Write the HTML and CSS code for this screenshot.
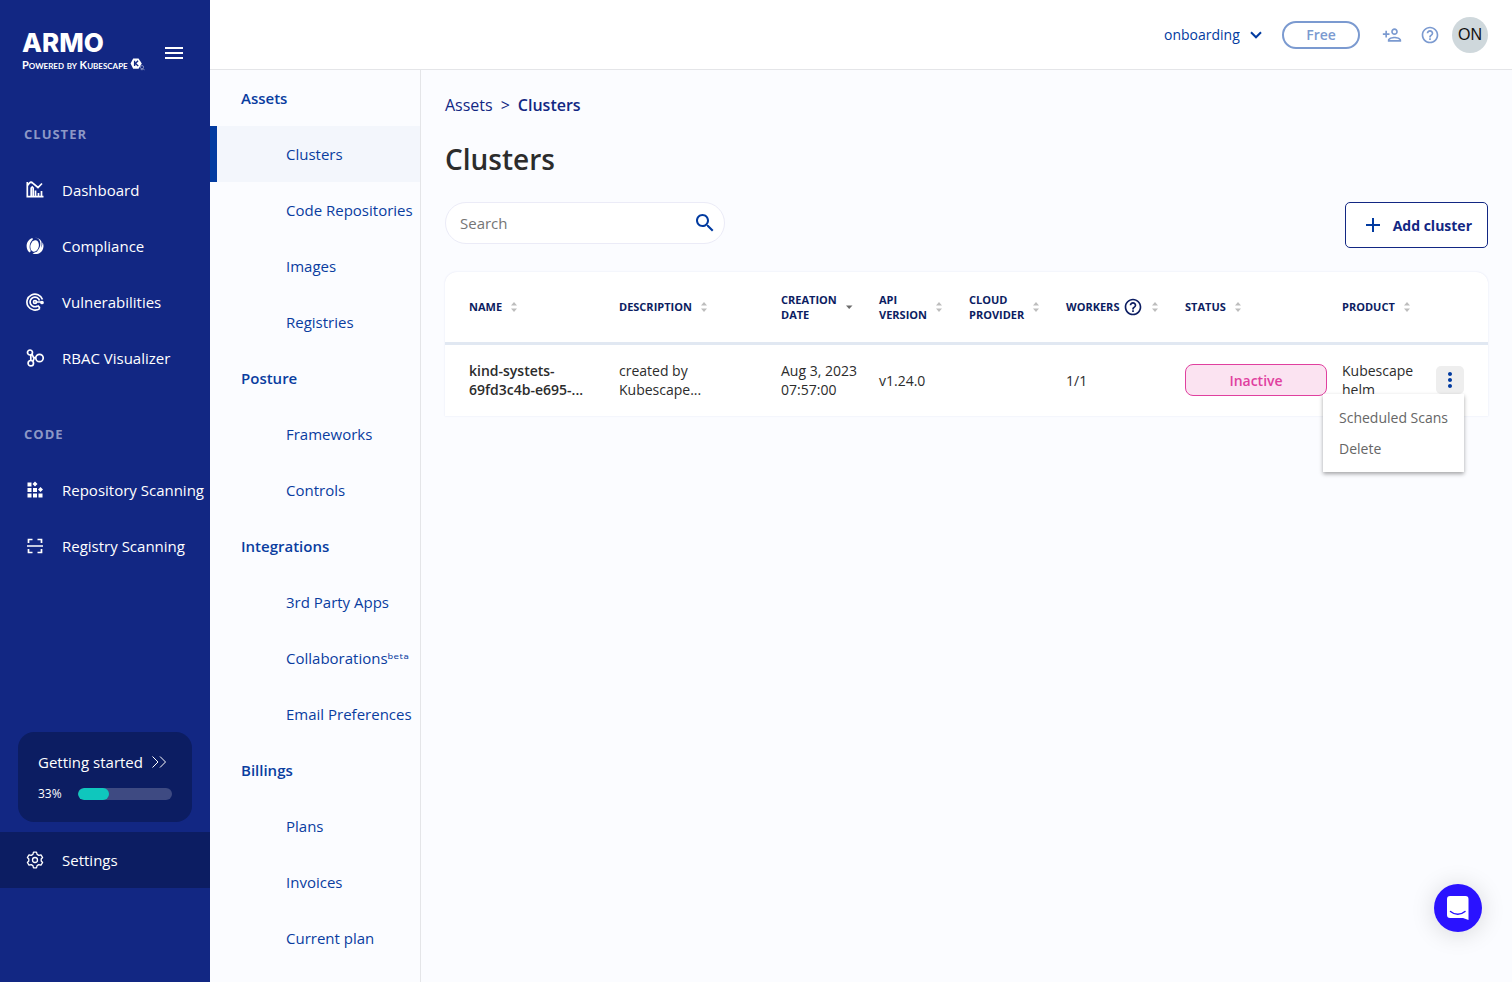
FILE: index.html
```html
<!DOCTYPE html>
<html lang="en">
<head>
<meta charset="utf-8">
<title>Clusters</title>
<meta name="viewport" content="width=device-width, initial-scale=1">
<link rel="stylesheet" href="styles.css">
</head>
<body>
<svg class="sprite" aria-hidden="true">
  <symbol id="sort" viewBox="0 0 8 12"><path d="M1 4.500 4 1l3 3.500zM1 7.500 4 11l3-3.500z"/></symbol>
  <symbol id="help" viewBox="0 0 24 24"><path d="M11 18h2v-2h-2v2zm1-16C6.480 2 2 6.480 2 12s4.480 10 10 10 10-4.480 10-10S17.520 2 12 2zm0 18c-4.410 0-8-3.590-8-8s3.590-8 8-8 8 3.590 8 8-3.590 8-8 8zm0-14c-2.210 0-4 1.790-4 4h2c0-1.100.9-2 2-2s2 .9 2 2c0 2-3 1.750-3 5h2c0-2.250 3-2.500 3-5 0-2.210-1.790-4-4-4z"/></symbol>
</svg>
<div class="app">
  <aside class="sidebar">
    <div class="brand-row">
      <a class="brand" href="#">
        <span class="brand-name">ARMO</span>
        <span class="brand-sub"><span>Powered by Kubescape</span>
          <svg class="brand-mark" viewBox="0 0 14 12"><path fill="#fff" d="M3 .5h5l3 4.500-3 5H3L.5 5z"/><path d="M4.300 2.500v5M7.500 2.500 5 5l2.700 2.500" fill="none" stroke="#122783" stroke-width="1.300"/><circle cx="11.200" cy="8.500" r="1.500" fill="none" stroke="#a0a9cd" stroke-width=".7"/><path d="m12.200 9.700 1.300 1.600M10 10.800h2" stroke="#a0a9cd" stroke-width=".7"/></svg>
        </span>
      </a>
      <button class="icon-button" aria-label="Toggle menu"><svg class="icon-24" viewBox="0 0 24 24"><path d="M3 18h18v-2H3v2zm0-5h18v-2H3v2zm0-7v2h18V6H3z"/></svg></button>
    </div>
    <nav class="side-nav" aria-label="Main">
      <h2 class="side-title">CLUSTER</h2>
      <a class="side-link" href="#"><svg class="side-icon stroke" viewBox="0 0 18 18"><path d="M1.300 1v14.700H17.500M1.500 4.500 3.500 2c1-1 2.300-.8 3.300.2L12 6.500 16 2.500M5.200 15V7l1-1 1 1v8M9.500 15V9.500M12.500 15v-3M15.500 15v-5"/></svg>Dashboard</a>
      <a class="side-link" href="#"><svg class="side-icon" viewBox="0 0 18 18"><ellipse cx="8.600" cy="9" rx="4.200" ry="5.900" transform="rotate(14 8.600 9)"/><path d="M6.500 1C2.500 2.200.6 5.500.6 9c0 3 1.300 5.300 3.200 6.600l1-1.600C2.800 11 3.300 5.500 6.800 2.500zM9 .8c2 0 4.200.8 5 3.700.8 3 0 7-2.800 9.500l1.200 1C15.500 12 16 8 15.400 4.500 14 1.800 11.500.6 9 .8zM6.500 16.400c4.500 2 9.500-.5 10.700-5.200.7-2.700.1-4.900-.8-6 .5 5.200-3.400 9.400-9.900 11.200z"/></svg>Compliance</a>
      <a class="side-link" href="#"><svg class="side-icon stroke" viewBox="0 0 18 18"><path d="M16.500 6.500A8 8 0 1 0 14 15.300M13.500 7.500a4.800 4.800 0 1 0-2 5.500M9.500 9h5.500"/><circle cx="9" cy="9" r="1.500"/><circle cx="16" cy="9.500" r="1" fill="#fff"/><path d="m11.500 12.500 2.500 2.300"/></svg>Vulnerabilities</a>
      <a class="side-link" href="#"><svg class="side-icon stroke" viewBox="0 0 18 18"><circle cx="4" cy="3.500" r="2.500"/><circle cx="4.800" cy="14.200" r="2.700"/><circle cx="13.500" cy="9" r="3.700"/><path d="M4.800 6v5.600M6 5l1.500 3.500H10M7 12l1.200-2.800"/></svg>RBAC Visualizer</a>
      <h2 class="side-title spaced">CODE</h2>
      <a class="side-link" href="#"><svg class="side-icon" viewBox="0 0 18 18"><path d="M1.500 1.500h4v4h-4zM1.500 7h4v4h-4zM1.500 12.500h4v4h-4zM7 7h4v4H7zM7 12.500h4v4H7zM12.500 12.500h4v4h-4zM9 .5l2.500 2.500L9 5.500 6.500 3zM14.500 6l2.500 2.500-2.500 2.500L12 8.500z"/></svg>Repository Scanning</a>
      <a class="side-link" href="#"><svg class="side-icon stroke" viewBox="0 0 18 18"><path d="M1 9h16M2.500 6V2.500h4M11.500 2.500h4V6M2.500 12v3.500h4M11.500 15.500h4V12"/></svg>Registry Scanning</a>
    </nav>
    <div class="side-bottom">
      <a class="started" href="#">
        <span class="started-head">Getting started <svg class="double" viewBox="0 0 16 14"><path d="m1.500 1.500 5.500 5.500-5.500 5.500M9 1.500 14.500 7 9 12.500"/></svg></span>
        <span class="started-row"><span class="percent">33%</span><progress class="bar" value="33" max="100" aria-label="Getting started progress"></progress></span>
      </a>
      <a class="side-link current" href="#"><svg class="side-icon gear" viewBox="0 0 18 18"><path d="M7.500 1.200h3l.6 2.200 1.700 1 2.200-.6 1.600 2.700L15.200 8v2l1.400 1.500-1.600 2.700-2.200-.6-1.700 1-.6 2.200h-3l-.6-2.200-1.700-1-2.200.6-1.600-2.700L2.800 10V8L1.400 6.500 3 3.800l2.200.6 1.700-1z"/><circle cx="9" cy="9" r="2.500"/></svg>Settings</a>
    </div>
  </aside>
  <div class="page">
    <header class="topbar">
      <div class="account">
        <select class="account-select" aria-label="Account"><option>onboarding</option></select>
        <svg class="account-arrow" viewBox="0 0 12 8"><path d="m1 1.300 5 5 5-5"/></svg>
      </div>
      <button class="plan">Free</button>
      <button class="icon-button invite" aria-label="Invite user"><svg class="icon-20" viewBox="0 0 24 24"><path d="M15 12c2.210 0 4-1.790 4-4s-1.790-4-4-4-4 1.790-4 4 1.790 4 4 4zm0-6c1.100 0 2 .9 2 2s-.9 2-2 2-2-.9-2-2 .9-2 2-2zm0 8c-2.670 0-8 1.340-8 4v2h16v-2c0-2.660-5.330-4-8-4zm-6 4c.22-.72 3.310-2 6-2 2.700 0 5.800 1.290 6 2H9zm-3-3v-3h3v-2H6V7H4v3H1v2h3v3z"/></svg></button>
      <button class="icon-button assist" aria-label="Help"><svg class="icon-20"><use href="#help"/></svg></button>
      <button class="avatar">ON</button>
    </header>
    <div class="body">
      <nav class="sub-nav" aria-label="Settings">
        <h3 class="sub-title">Assets</h3>
        <a class="sub-link active" href="#">Clusters</a>
        <a class="sub-link" href="#">Code Repositories</a>
        <a class="sub-link" href="#">Images</a>
        <a class="sub-link" href="#">Registries</a>
        <h3 class="sub-title">Posture</h3>
        <a class="sub-link" href="#">Frameworks</a>
        <a class="sub-link" href="#">Controls</a>
        <h3 class="sub-title">Integrations</h3>
        <a class="sub-link" href="#">3rd Party Apps</a>
        <a class="sub-link" href="#">Collaborations<span class="beta">ᵇᵉᵗᵃ</span></a>
        <a class="sub-link" href="#">Email Preferences</a>
        <h3 class="sub-title">Billings</h3>
        <a class="sub-link" href="#">Plans</a>
        <a class="sub-link" href="#">Invoices</a>
        <a class="sub-link" href="#">Current plan</a>
      </nav>
      <main class="content">
        <nav class="crumbs" aria-label="Breadcrumb"><a href="#">Assets</a><span>&gt;</span><a class="here" href="#">Clusters</a></nav>
        <h1 class="title">Clusters</h1>
        <div class="tools">
          <label class="search"><input type="search" placeholder="Search" aria-label="Search"><svg class="icon-24" viewBox="0 0 24 24"><path d="M15.500 14h-.79l-.28-.27C15.410 12.590 16 11.110 16 9.500 16 5.910 13.090 3 9.500 3S3 5.910 3 9.500 5.910 16 9.500 16c1.610 0 3.090-.59 4.230-1.570l.27.28v.79l5 4.990L20.490 19l-4.990-5zm-6 0C7.010 14 5 11.990 5 9.500S7.010 5 9.500 5 14 7.010 14 9.500 11.990 14 9.500 14z"/></svg></label>
          <button class="add"><svg class="icon-24" viewBox="0 0 24 24"><path d="M19 13h-6v6h-2v-6H5v-2h6V5h2v6h6v2z"/></svg>Add cluster</button>
        </div>
        <div class="card">
          <table class="grid">
            <colgroup><col class="c-name"><col class="c-desc"><col class="c-date"><col class="c-api"><col class="c-cloud"><col class="c-workers"><col class="c-status"><col class="c-product"><col class="c-menu"></colgroup>
            <thead>
              <tr>
                <th scope="col"><button class="sorter">NAME<svg class="sort"><use href="#sort"/></svg></button></th>
                <th scope="col"><button class="sorter">DESCRIPTION<svg class="sort"><use href="#sort"/></svg></button></th>
                <th scope="col" aria-sort="descending"><button class="sorter"><span>CREATION<br>DATE</span><svg class="sort on" viewBox="0 0 8 12"><path d="M1 4.500h6.500L4.200 8z"/></svg></button></th>
                <th scope="col"><button class="sorter"><span>API<br>VERSION</span><svg class="sort"><use href="#sort"/></svg></button></th>
                <th scope="col"><button class="sorter"><span>CLOUD<br>PROVIDER</span><svg class="sort"><use href="#sort"/></svg></button></th>
                <th scope="col"><button class="sorter">WORKERS<svg class="hint"><use href="#help"/></svg><svg class="sort"><use href="#sort"/></svg></button></th>
                <th scope="col"><button class="sorter">STATUS<svg class="sort"><use href="#sort"/></svg></button></th>
                <th scope="col"><button class="sorter">PRODUCT<svg class="sort"><use href="#sort"/></svg></button></th>
                <th></th>
              </tr>
            </thead>
            <tbody>
              <tr>
                <td class="strong">kind-systets-<br>69fd3c4b-e695-...</td>
                <td>created by<br>Kubescape...</td>
                <td>Aug 3, 2023<br>07:57:00</td>
                <td>v1.24.0</td>
                <td></td>
                <td>1/1</td>
                <td class="status-cell"><span class="status">Inactive</span></td>
                <td>Kubescape<br>helm</td>
                <td class="menu-cell">
                  <div class="more">
                    <button class="more-button" aria-label="Row actions"><svg class="icon-24" viewBox="0 0 24 24"><path d="M12 8c1.100 0 2-.9 2-2s-.9-2-2-2-2 .9-2 2 .9 2 2 2zm0 2c-1.100 0-2 .9-2 2s.9 2 2 2 2-.9 2-2-.9-2-2-2zm0 6c-1.100 0-2 .9-2 2s.9 2 2 2 2-.9 2-2-.9-2-2-2z"/></svg></button>
                    <div class="menu" role="menu"><button role="menuitem">Scheduled Scans</button><button role="menuitem">Delete</button></div>
                  </div>
                </td>
              </tr>
            </tbody>
          </table>
        </div>
      </main>
    </div>
  </div>
</div>
<button class="chat" aria-label="Open chat"><svg viewBox="0 0 24 26"><path fill="#fff" d="M4 1h15.500a3 3 0 0 1 3 3v21l-5.500-2H4a3 3 0 0 1-3-3V4a3 3 0 0 1 3-3z"/><path d="M4.500 16.500c4.300 3.600 10.200 3.600 14.500 0" fill="none" stroke="#2a12ff" stroke-width="1.500" stroke-linecap="round"/></svg></button>
</body>
</html>
```
FILE: styles.css
```css
* { box-sizing: border-box; }
body { margin: 0; font-family: "Open Sans", sans-serif; font-size: 14px; color: #2c2c2c; background: #fbfcff; }
a { color: inherit; text-decoration: none; }
button { font: inherit; color: inherit; background: none; border: 0; padding: 0; cursor: pointer; }
svg { display: block; flex: none; fill: currentColor; }
h1, h2, h3 { margin: 0; }
.sprite { display: none; }
.icon-24 { width: 24px; height: 24px; }
.icon-20 { width: 20px; height: 20px; }

.app { display: flex; height: 100vh; overflow: hidden; }

.sidebar { flex: 0 0 210px; display: flex; flex-direction: column; background: #122783; color: #fff; white-space: nowrap; }
.brand-row { display: flex; justify-content: space-between; align-items: center; height: 106px; padding: 0 24px 0 22px; }
.brand { display: flex; flex-direction: column; margin-bottom: 6px; }
.brand-name { font: 800 26px/28px Inter, sans-serif; }
.brand-sub { display: flex; align-items: center; font: 700 11px/15px Lato, sans-serif; font-variant: small-caps; gap: 2px; }
.brand-mark { width: 15px; height: 13px; }
.side-title { height: 56px; padding-left: 24px; font-size: 13px; line-height: 56px; font-weight: 700; letter-spacing: 1px; color: #8d98c6; }
.spaced { margin-top: 20px; }
.side-link { display: flex; align-items: center; gap: 18px; height: 56px; padding-left: 26px; font-size: 15px; }
.side-icon { width: 18px; height: 18px; }
.stroke { fill: none; stroke: #fff; stroke-width: 1.700; }
.gear { fill: none; stroke: #fff; stroke-width: 1.300; stroke-linejoin: round; }
.side-bottom { margin-top: auto; padding-bottom: 94px; }
.started { display: flex; flex-direction: column; gap: 12px; height: 90px; margin: 0 18px 10px; padding: 20px; border-radius: 16px; background: #0c1d62; }
.started-head { display: flex; align-items: center; gap: 8px; font-size: 15px; line-height: 20px; }
.double { width: 16px; height: 14px; fill: none; stroke: #fff; }
.started-row { display: flex; align-items: center; font-size: 12px; line-height: 20px; }
.percent { width: 40px; }
.bar { flex: none; width: 94px; height: 12px; border: 0; border-radius: 6px; overflow: hidden; appearance: none; background: #3e4a82; }
.bar::-webkit-progress-bar { background: #3e4a82; }
.bar::-webkit-progress-value { background: #0fc7bd; border-radius: 6px; }
.current { background: #0c1d62; }

.page { flex: 1; min-width: 0; display: flex; flex-direction: column; }
.topbar { flex: none; display: flex; align-items: center; justify-content: flex-end; height: 70px; padding-right: 24px; background: #fff; border-bottom: 1px solid #e4e5e8; color: #7b9ad0; }
.account { display: flex; align-items: center; color: #023ba0; }
.account-select { appearance: none; margin: 0 -22px 0 0; padding: 0 32px 0 0; border: 0; background: none; font: 14px/20px "Open Sans", sans-serif; color: inherit; }
.account-arrow { width: 12px; height: 8px; margin-right: 20px; fill: none; stroke: currentColor; stroke-width: 2; pointer-events: none; }
.plan { width: 78px; height: 28px; border: 2px solid #7b9ad0; border-radius: 14px; font-weight: 600; line-height: 24px; }
.invite { margin-left: 22px; }
.assist { margin: 0 12px 0 18px; }
.avatar { width: 36px; height: 36px; border-radius: 50%; background: #cfd8dc; color: #111; font: 16px "Liberation Sans", sans-serif; }

.body { flex: 1; min-height: 0; display: flex; }
.sub-nav { flex: 0 0 211px; border-right: 1px solid #e4e5e8; color: #0a3d9f; font-size: 15px; white-space: nowrap; overflow: hidden; }
.sub-title { height: 56px; padding-left: 31px; font-size: 15px; line-height: 56px; font-weight: 600; }
.sub-link { display: block; height: 56px; padding-left: 69px; border-left: 7px solid transparent; line-height: 56px; }
.active { border-color: #023ba0; background: #f3f6fc; }
.beta { font-family: "DejaVu Sans", sans-serif; font-size: 14px; line-height: 20px; }

.content { flex: 1; min-width: 0; padding: 24px; }
.crumbs { display: flex; gap: 8px; font-size: 16px; line-height: 22px; color: #122783; }
.here { font-weight: 600; }
.title { margin-top: 24px; font-size: 28px; line-height: 38px; font-weight: 600; }
.tools { display: flex; justify-content: space-between; align-items: flex-start; margin-top: 24px; }
.search { display: flex; align-items: center; width: 280px; height: 42px; padding: 0 7px 0 14px; border: 1px solid #ebebf7; border-radius: 21px; background: #fff; color: #023ba0; }
.search input { flex: 1; min-width: 0; border: 0; padding: 0; outline: 0; background: none; font: 15px/20px "Open Sans", sans-serif; color: #2c2c2c; }
.search input::placeholder { color: #757575; }
.add { display: flex; align-items: center; gap: 8px; height: 46px; padding: 0 15px; border: 1px solid #122783; border-radius: 5px; background: #fff; color: #122783; font-weight: 700; }
.add svg { color: #023ba0; }

.card { margin-top: 24px; border-radius: 12px 12px 0 0; background: #fff; box-shadow: 0 0 2px #dfe2f2; }
.grid { width: 100%; table-layout: fixed; border-collapse: collapse; }
.c-name { width: 174px; }
.c-desc { width: 162px; }
.c-date { width: 98px; }
.c-api { width: 90px; }
.c-cloud { width: 97px; }
.c-workers { width: 119px; }
.c-status { width: 157px; }
.c-product { width: 94px; }
.c-menu { width: 52px; }
th, td { padding: 0; text-align: left; }
th:first-child, td:first-child { padding-left: 24px; }
thead tr { height: 71px; border-bottom: 3px solid #e1e8f2; }
tbody tr { height: 73px; }
td { line-height: 19px; }
.sorter { display: flex; align-items: center; text-align: left; font-size: 11px; line-height: 15px; font-weight: 700; color: #0c1d62; white-space: nowrap; }
.sort { width: 8px; height: 12px; margin-left: 8px; color: #bdbdbd; }
.on { color: #6b6b6b; }
.hint { width: 20px; height: 20px; margin-left: 4px; }
.strong { font-weight: 600; }
.status-cell { padding-right: 15px; }
.status { display: block; height: 32px; border: 1px solid #e0409f; border-radius: 8px; background: #fbe3f1; color: #e0409f; text-align: center; line-height: 32px; font-weight: 600; }
.more { position: relative; width: 28px; height: 28px; }
.more-button { display: grid; place-items: center; width: 28px; height: 28px; border-radius: 5px; background: #eee; color: #023ba0; }
.menu { position: absolute; top: 100%; right: 0; padding: 8px 0; background: #fff; box-shadow: 0 2px 4px rgba(0, 0, 0, .35); }
.menu button { display: block; width: 100%; padding: 0 16px; line-height: 31px; text-align: left; white-space: nowrap; color: #666; }

.chat { position: fixed; right: 30px; bottom: 50px; display: grid; place-items: center; width: 48px; height: 48px; border-radius: 50%; background: #2a12ff; box-shadow: 0 2px 24px rgba(0, 0, 0, .15); }
.chat svg { width: 24px; height: 26px; }
```
